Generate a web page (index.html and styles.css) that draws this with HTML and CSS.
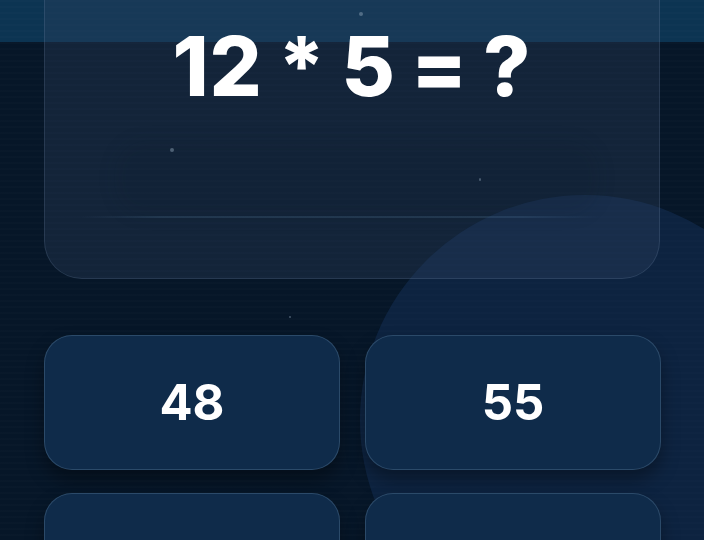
FILE: index.html
```html
<!DOCTYPE html>
<html lang="en">
<head>
<meta charset="utf-8">
<title>Quiz</title>
<link rel="stylesheet" href="styles.css">
</head>
<body>
<div class="app">
  <div class="orb"></div>
  <span class="star star-a"></span>
  <span class="star star-b"></span>
  <span class="star star-c"></span>
  <span class="star star-d"></span>
  <main class="stage">
    <section class="card">
      <h1 class="equation">12 * 5 = ?</h1>
      <div class="card-glow"></div>
      <div class="card-line"></div>
    </section>
    <div class="answers">
      <button class="answer">48</button>
      <button class="answer">55</button>
      <button class="answer"></button>
      <button class="answer"></button>
    </div>
  </main>
</div>
</body>
</html>
```
FILE: styles.css
```css
html, body {
  margin: 0;
  padding: 0;
  background: #ffffff;
}

.app {
  position: relative;
  width: 704px;
  height: 540px;
  overflow: hidden;
  background:
    repeating-linear-gradient(to bottom, rgba(255,255,255,0.012) 0 2px, rgba(0,0,0,0) 2px 6px),
    linear-gradient(to bottom, #0c3452 0, #0c3452 42px, #061628 42px, #061628 100%);
  font-family: Inter, "Liberation Sans", Arial, sans-serif;
}

.orb {
  position: absolute;
  left: 360px;
  top: 195px;
  width: 450px;
  height: 450px;
  border-radius: 50%;
  background: rgba(25, 58, 105, 0.38);
  z-index: 0;
}

.star {
  position: absolute;
  border-radius: 50%;
  background: rgba(150, 170, 190, 0.45);
  z-index: 2;
}
.star-a { left: 359px; top: 12px; width: 4px; height: 4px; }
.star-b { left: 170px; top: 148px; width: 4px; height: 4px; }
.star-c { left: 479px; top: 178px; width: 2px; height: 3px; }
.star-d { left: 289px; top: 316px; width: 2px; height: 2px; }

.stage {
  position: relative;
  z-index: 1;
  display: flex;
  flex-direction: column;
  padding: 0 44px;
}

.card {
  position: relative;
  margin-top: -60px;
  height: 339px;
  box-sizing: border-box;
  border: 1px solid rgba(150, 175, 205, 0.16);
  border-radius: 38px;
  background: rgba(50, 70, 100, 0.3);
  display: flex;
  flex-direction: column;
  align-items: center;
  padding-top: 85px;
}

.equation {
  margin: 0;
  color: #ffffff;
  font-size: 82px;
  font-weight: 800;
  line-height: 1;
  letter-spacing: 1px;
  word-spacing: -4px;
  font-feature-settings: "calt" 0;
  font-variant-ligatures: none;
  white-space: pre;
}

.card-glow {
  position: absolute;
  left: 70px;
  right: 60px;
  top: 200px;
  height: 74px;
  border-radius: 30px;
  background: rgba(10, 25, 45, 0.12);
  filter: blur(8px);
}

.card-line {
  position: absolute;
  left: 36px;
  right: 60px;
  top: 275px;
  height: 2px;
  background: linear-gradient(to right, rgba(90,130,160,0), rgba(90,130,160,0.2) 15%, rgba(90,130,160,0.2) 85%, rgba(90,130,160,0));
}

.answers {
  margin-top: 56px;
  display: grid;
  grid-template-columns: 296px 296px;
  grid-auto-rows: 135px;
  column-gap: 25px;
  row-gap: 23px;
}

.answer {
  box-sizing: border-box;
  border: 1px solid rgba(110, 145, 180, 0.3);
  border-radius: 28px;
  background: #0f2b4a;
  box-shadow: 0 10px 18px rgba(0, 0, 0, 0.35);
  color: #ffffff;
  font-family: Inter, "Liberation Sans", Arial, sans-serif;
  font-size: 49px;
  font-weight: 700;
  padding: 0;
  display: flex;
  align-items: center;
  justify-content: center;
}
```
